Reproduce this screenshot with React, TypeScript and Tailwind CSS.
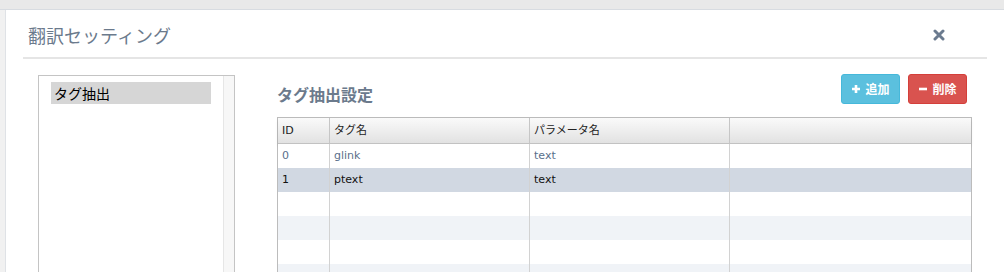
import React from 'react';

const jp = { fontFamily: '"Noto Sans CJK JP", "Noto Sans", sans-serif' };
const grid = { fontFamily: '"DejaVu Sans", "Noto Sans CJK JP", sans-serif' };

const rows = [
  { id: '0', tag: 'glink', param: 'text' },
  { id: '1', tag: 'ptext', param: 'text' },
  null,
  null,
  null,
  null,
];

export default function App() {
  return (
    <div className="w-[1004px] h-[272px] overflow-hidden flex flex-col bg-white" style={jp}>
      {/* top band of the page behind the modal */}
      <div className="h-[10px] shrink-0 bg-[#e9e9e9] border-b border-[#d8dce1]" />

      <div className="flex flex-1 min-h-0">
        <div className="w-[6px] shrink-0 bg-[#f1f1f1] border-r border-[#dfe2e6]" />

        <div className="flex-1 bg-white px-[17px]">
          {/* Modal header */}
          <div className="h-[49px] flex items-center justify-between border-b-2 border-[#e5e5e5] pl-[5px] pr-[42px]">
            <h1 className="text-[18px] leading-none text-[#6b7a8c] pt-[2px]">翻訳セッティング</h1>
            <svg width="12" height="12" viewBox="0 0 12 12" className="mt-[3px]">
              <path d="M2 2 L10 10 M10 2 L2 10" stroke="#6b7b8f" strokeWidth="3" strokeLinecap="round" />
            </svg>
          </div>

          {/* Modal body */}
          <div className="flex pt-[16px] px-[15px] gap-[42px]">
            {/* Menu list */}
            <div className="w-[197px] h-[220px] shrink-0 flex border border-[#c4c4c4]">
              <div className="flex-1 px-[12px] pt-[6px]">
                <div className="h-[22px] bg-[#d6d6d6] pl-[3px] text-[14px] leading-[22px] text-black">タグ抽出</div>
              </div>
              <div className="w-[11px] bg-[#f7f7f7] border-l border-[#e6e6e6]" />
            </div>

            {/* Tag settings */}
            <div className="flex-1 min-w-0">
              <div className="h-[42px] flex justify-between items-start">
                <h2 className="mt-[8px] text-[16px] leading-[22px] font-bold text-[#6b7a8c]">タグ抽出設定</h2>
                <div className="flex gap-[8px] mr-[5px]">
                  <button
                    type="button"
                    className="h-[30px] w-[59px] -mt-[1px] flex items-center justify-center gap-[4px] rounded-[3px] bg-[#5bc0de] border border-[#46b8da] text-white text-[12px] font-bold"
                  >
                    <svg width="10" height="10" viewBox="0 0 10 10">
                      <path d="M5 1 V9 M1 5 H9" stroke="white" strokeWidth="2.6" />
                    </svg>
                    追加
                  </button>
                  <button
                    type="button"
                    className="h-[30px] w-[59px] -mt-[1px] flex items-center justify-center gap-[4px] rounded-[3px] bg-[#d9534f] border border-[#d43f3a] text-white text-[12px] font-bold"
                  >
                    <svg width="10" height="10" viewBox="0 0 10 10">
                      <path d="M1 5 H9" stroke="white" strokeWidth="2.6" />
                    </svg>
                    削除
                  </button>
                </div>
              </div>

              {/* Grid */}
              <div className="border border-[#bcbcbc] text-[11px]" style={grid}>
                <div className="h-[26px] grid grid-cols-[52px_200px_200px_1fr] bg-gradient-to-b from-[#fafafa] to-[#e2e2e2] border-b border-[#c2c2c2] shadow-[0_2px_3px_rgba(0,0,0,0.08)] text-[#222]">
                  <div className="pl-[4px] leading-[25px] border-r border-[#c6c6c6]">ID</div>
                  <div className="pl-[4px] leading-[25px] border-r border-[#c6c6c6]">タグ名</div>
                  <div className="pl-[4px] leading-[25px] border-r border-[#c6c6c6]">パラメータ名</div>
                  <div />
                </div>
                {rows.map((r, i) => {
                  const bg = i === 1 ? 'bg-[#d1d8e2] text-[#111]' : i % 2 === 1 ? 'bg-[#f0f3f7]' : 'bg-white';
                  const color = i === 0 ? 'text-[#5a6f8b]' : '';
                  return (
                    <div key={i} className={`h-[24px] grid grid-cols-[52px_200px_200px_1fr] leading-[24px] ${bg} ${color}`}>
                      <div className="pl-[4px] border-r border-[#d2d2d2]">{r?.id}</div>
                      <div className="pl-[4px] border-r border-[#d2d2d2]">{r?.tag}</div>
                      <div className="pl-[4px] border-r border-[#d2d2d2]">{r?.param}</div>
                      <div />
                    </div>
                  );
                })}
              </div>
            </div>
          </div>
        </div>
      </div>
    </div>
  );
}
